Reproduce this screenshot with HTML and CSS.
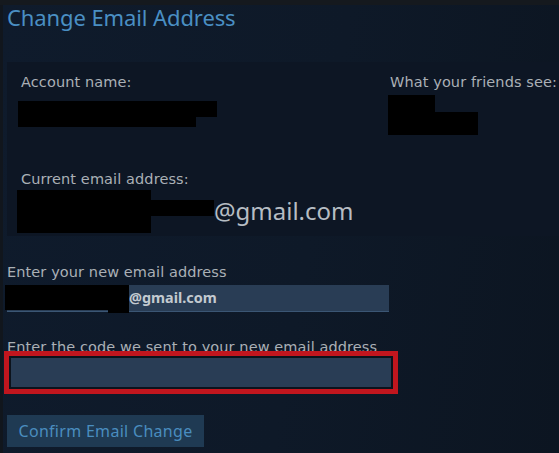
FILE: index.html
```html
<!DOCTYPE html>
<html lang="en">
<head>
<meta charset="utf-8">
<title>Change Email Address</title>
<link rel="stylesheet" href="styles.css">
</head>
<body>
<div class="topbar"></div>
<div class="main">
  <h1 class="title">Change Email Address</h1>
  <section class="panel">
    <div class="panel-cols">
      <div class="col-left">
        <div class="label">Account name:</div>
        <div class="redact-stack acct">
          <div class="redact r-acct1"></div>
          <div class="redact r-acct2"></div>
        </div>
      </div>
      <div class="col-right">
        <div class="label">What your friends see:</div>
        <div class="redact-stack friends">
          <div class="redact r-fr1"></div>
          <div class="redact r-fr2"></div>
        </div>
      </div>
    </div>
    <div class="label cur-label">Current email address:</div>
    <div class="cur-email">
      <div class="redact r-em1"></div>
      <div class="redact r-em2"></div>
      <span class="cur-domain">@gmail.com</span>
    </div>
  </section>
  <div class="label form-label first">Enter your new email address</div>
  <div class="input new-email">
    <div class="redact r-new1"></div>
    <div class="redact r-new2"></div>
    <span class="new-domain">@gmail.com</span>
  </div>
  <div class="label form-label second">Enter the code we sent to your new email address</div>
  <div class="highlight">
    <div class="input code-input"></div>
  </div>
  <button class="btn" type="button">Confirm Email Change</button>
</div>
</body>
</html>
```
FILE: styles.css
```css
html, body {
  margin: 0;
  padding: 0;
  height: 100%;
  overflow: hidden;
}
body {
  background: linear-gradient(100deg, #0f1b2c 0%, #0e1928 55%, #0c1521 100%);
  font-family: "Noto Sans", "DejaVu Sans", sans-serif;
  color: #aab0b6;
}
.topbar {
  height: 5px;
  background: #15191e;
}
.main {
  border-left: 3px solid #11161d;
  padding-left: 4px;
  min-height: 448px;
  box-sizing: border-box;
}
.title {
  margin: 0;
  font-size: 22px;
  line-height: 24px;
  font-weight: 400;
  color: #4a8fc3;
  letter-spacing: -0.1px;
}
.panel {
  margin-top: 33px;
  background: #0d1624;
  padding: 10px 0 10px 14px;
  height: 174px;
  box-sizing: border-box;
}
.label {
  font-family: "DejaVu Sans", "Noto Sans", sans-serif;
  font-size: 14.5px;
  letter-spacing: 0.1px;
  line-height: 20px;
  color: #aab0b6;
  white-space: nowrap;
}
.panel-cols {
  display: flex;
}
.col-left {
  width: 369px;
}
.redact {
  background: #000;
}
.redact-stack.acct {
  margin: 9px 0 0 -3px;
}
.r-acct1 { width: 199px; height: 16px; }
.r-acct2 { width: 178px; height: 10px; }
.redact-stack.friends {
  margin: 3px 0 0 -2px;
}
.r-fr1 { width: 47px; height: 17px; }
.r-fr2 { width: 90px; height: 23px; }
.cur-label {
  margin-top: 34px;
}
.cur-email {
  display: flex;
  align-items: flex-start;
  margin: 1px 0 0 -4px;
}
.r-em1 { width: 134px; height: 43px; }
.r-em2 { width: 63px; height: 16px; margin-top: 10px; }
.cur-domain {
  font-size: 24px;
  line-height: 30px;
  margin-top: 6px;
  color: #b6bdc3;
}
.form-label.first {
  margin-top: 26px;
}
.input {
  background: #293d55;
  box-sizing: border-box;
}
.new-email {
  margin-top: 3px;
  width: 382px;
  height: 27px;
  display: flex;
  align-items: flex-start;
  border-bottom: 1px solid #3b5674;
}
.r-new1 { width: 103px; height: 25px; margin-left: -2px; }
.r-new2 { width: 21px; height: 28px; }
.new-domain {
  font-size: 14.4px;
  line-height: 18px;
  font-weight: 700;
  color: #c3cad0;
  margin-top: 4px;
}
.form-label.second {
  margin-top: 25px;
}
.highlight {
  position: relative;
  margin: -6px 0 0 -3px;
  width: 394px;
  height: 43px;
  border: 5px solid #c1161e;
  box-sizing: border-box;
}
.code-input {
  width: 100%;
  height: 100%;
  border: 2px solid #0c131c;
}
.btn {
  display: block;
  margin-top: 21px;
  width: 197px;
  height: 32px;
  padding: 0;
  border: none;
  background: #1f3a53;
  color: #4a8dbf;
  font-family: "Noto Sans", "DejaVu Sans", sans-serif;
  font-size: 16px;
  letter-spacing: 0.3px;
  line-height: 32px;
  text-align: center;
}
```
